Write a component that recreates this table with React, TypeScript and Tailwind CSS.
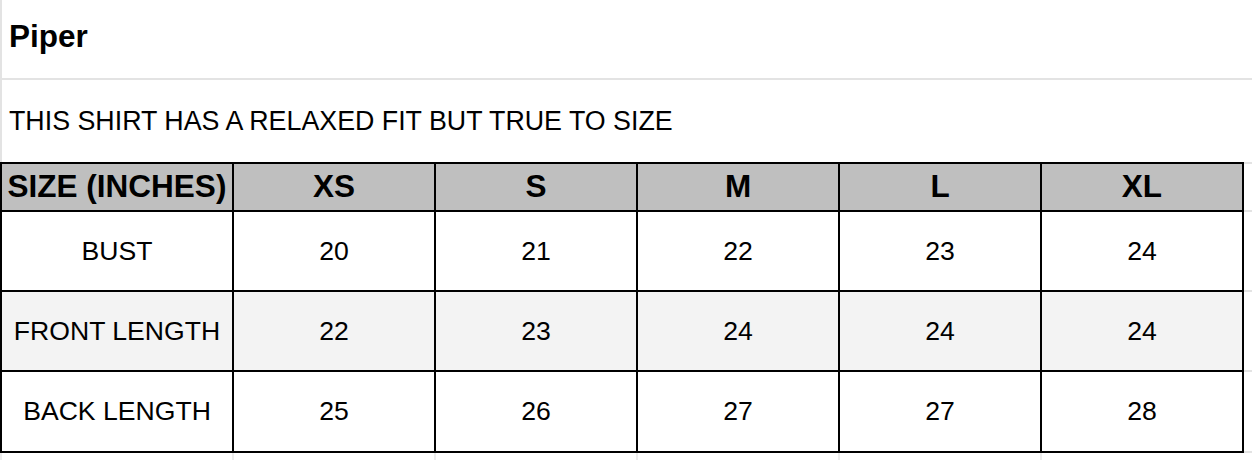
const sizes = ["XS", "S", "M", "L", "XL"];

const rows = [
  { label: "BUST", values: [20, 21, 22, 23, 24], bg: "bg-white", h: "h-[78px]" },
  { label: "FRONT LENGTH", values: [22, 23, 24, 24, 24], bg: "bg-[#f3f3f3]", h: "h-[78px]" },
  { label: "BACK LENGTH", values: [25, 26, 27, 27, 28], bg: "bg-white", h: "h-[79px]" },
];

export default function App() {
  return (
    <div className="w-[1252px] h-[460px] overflow-hidden bg-white text-black font-['Liberation_Sans',Arial,sans-serif]">
      {/* title + note, spreadsheet style */}
      <div className="border-l-2 border-[#e3e3e3]">
        <div className="h-[78px] flex items-center pl-[7px] pb-1 text-[31.5px] font-bold leading-none">Piper</div>
        <div className="h-[2px] bg-[#e3e3e3] -ml-[2px]" />
        <div className="h-[82px] flex items-center pl-[7px] text-[26.8px] leading-none">
          THIS SHIRT HAS A RELAXED FIT BUT TRUE TO SIZE
        </div>
      </div>

      <div className="flex">
        <div className="grid grid-cols-[230px_200px_200px_200px_200px_200px] gap-[2px] p-[2px] bg-black w-[1244px] shrink-0">
          <div className="h-[46px] bg-[#bfbfbf] flex items-center justify-center text-[31.5px] font-bold leading-none whitespace-nowrap">
            SIZE (INCHES)
          </div>
          {sizes.map((s) => (
            <div key={s} className="h-[46px] bg-[#bfbfbf] flex items-center justify-center text-[31.5px] font-bold leading-none">
              {s}
            </div>
          ))}
          {rows.map((r) => (
            <>
              <div key={r.label} className={`${r.h} ${r.bg} flex items-center justify-center text-[26.6px] leading-none whitespace-nowrap`}>
                {r.label}
              </div>
              {r.values.map((v, i) => (
                <div key={r.label + i} className={`${r.h} ${r.bg} flex items-center justify-center text-[26.6px] leading-none`}>
                  {v}
                </div>
              ))}
            </>
          ))}
        </div>
        {/* gridlines running past the table */}
        <div className="flex-1 flex flex-col">
          <div className="h-[2px] bg-[#e3e3e3]" />
          <div className="h-[46px]" />
          <div className="h-[2px] bg-[#e3e3e3]" />
          <div className="h-[78px]" />
          <div className="h-[2px] bg-[#e3e3e3]" />
          <div className="h-[78px]" />
          <div className="h-[2px] bg-[#e3e3e3]" />
          <div className="h-[79px]" />
          <div className="h-[2px] bg-[#e3e3e3]" />
        </div>
      </div>

      <div className="grid grid-cols-[232px_202px_202px_202px_202px_202px] h-[10px]">
        {[0, 1, 2, 3, 4, 5].map((i) => (
          <div key={i} className="border-l-2 border-[#ececec]" />
        ))}
      </div>
    </div>
  );
}
